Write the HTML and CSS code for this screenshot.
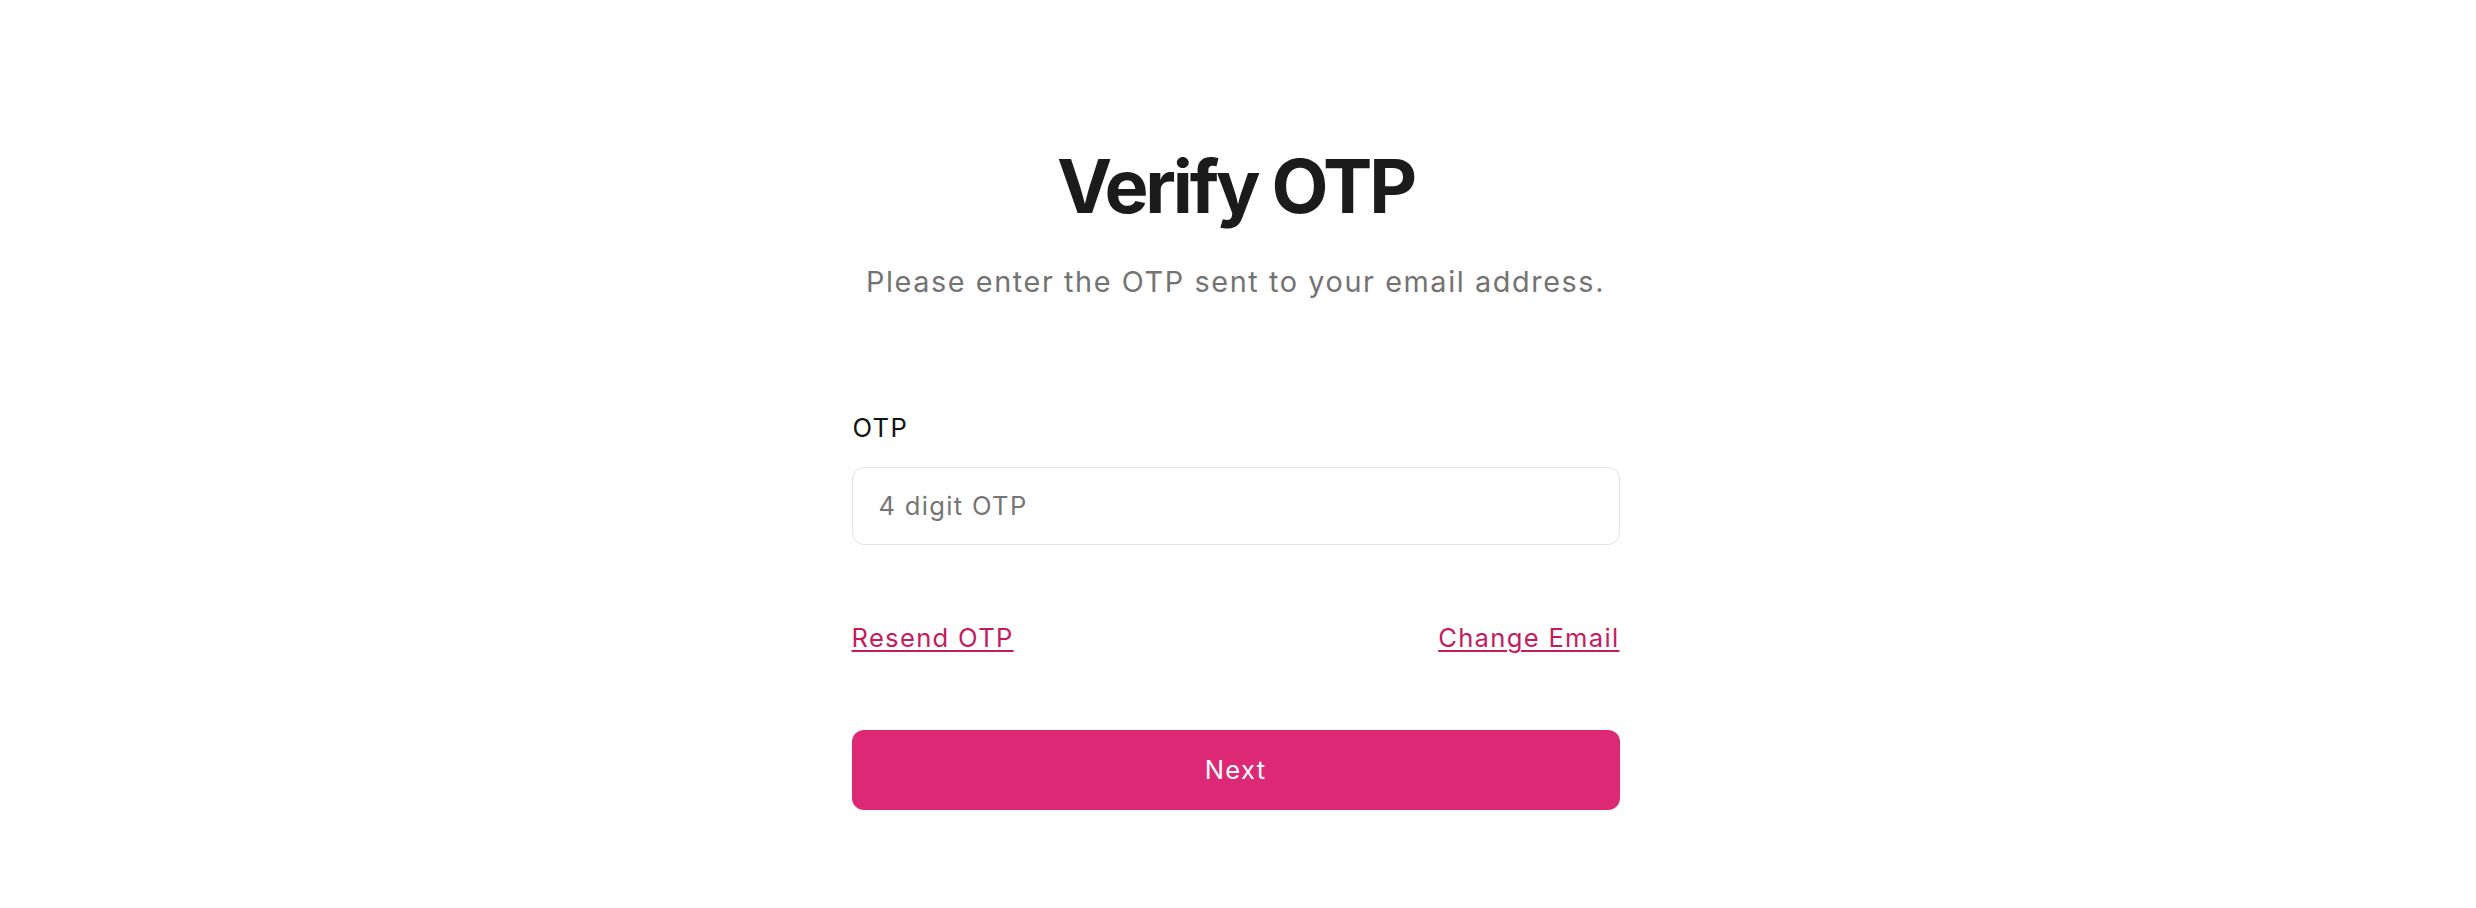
FILE: index.html
```html
<!DOCTYPE html>
<html lang="en">
<head>
<meta charset="utf-8">
<title>Verify OTP</title>
<link rel="stylesheet" href="styles.css">
</head>
<body>
<main class="page">
  <section class="card">
    <h1 class="title">Verify OTP</h1>
    <p class="subtitle">Please enter the OTP sent to your email address.</p>
    <form class="form">
      <label class="label" for="otp">OTP</label>
      <input class="input" id="otp" type="text" placeholder="4 digit OTP">
      <div class="links">
        <a class="link" href="#">Resend OTP</a>
        <a class="link" href="#">Change Email</a>
      </div>
      <button class="btn" type="button">Next</button>
    </form>
  </section>
</main>
</body>
</html>
```
FILE: styles.css
```css
* { box-sizing: border-box; }
html, body { margin: 0; padding: 0; background: #ffffff; }
body { font-family: Inter, "Noto Sans", sans-serif; }
.page {
  display: flex;
  justify-content: center;
  padding: 141px 5px 0 0;
}
.card {
  width: 768px;
  display: flex;
  flex-direction: column;
}
.title {
  margin: 0;
  font-size: 74px;
  line-height: 90px;
  font-weight: 700;
  color: #1b1b1b;
  text-align: center;
  letter-spacing: -3.2px;
}
.subtitle {
  margin: 30.5px 0 0;
  font-size: 28.8px;
  line-height: 40px;
  color: #737373;
  text-align: center;
  letter-spacing: 1.6px;
}
.form {
  display: flex;
  flex-direction: column;
  margin-top: 108px;
}
.label {
  font-size: 25.6px;
  line-height: 36px;
  color: #111111;
  padding-left: 1px;
  letter-spacing: 1.3px;
}
.input {
  margin-top: 21.3px;
  height: 78px;
  border: 1.6px solid #e3e3e3;
  border-radius: 12px;
  padding: 0 26px;
  font-family: inherit;
  font-size: 25.6px;
  letter-spacing: 1.3px;
  color: #222;
  outline: none;
}
.input::placeholder { color: #757575; }
.links {
  margin-top: 75.7px;
  display: flex;
  justify-content: space-between;
  font-size: 25.6px;
  line-height: 36px;
  letter-spacing: 1.3px;
}
.link {
  color: #c31c5e;
  text-decoration: underline;
  text-decoration-thickness: 2px;
  text-underline-offset: 3px;
}
.btn {
  margin-top: 73.3px;
  height: 80px;
  border: 0;
  border-radius: 12px;
  background: #dd2876;
  color: #ffffff;
  font-family: inherit;
  font-size: 25.6px;
  font-weight: 400;
  letter-spacing: 1.3px;
}
```
